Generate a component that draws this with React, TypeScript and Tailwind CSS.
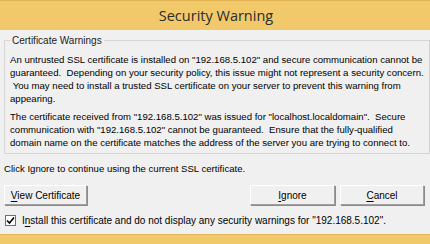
import React from 'react';

const font = { fontFamily: '"Liberation Sans", Arial, sans-serif' };

const Btn: React.FC<{ children: React.ReactNode; className?: string }> = ({ children, className }) => (
  <button
    className={`h-[20px] bg-[#f0f0f0] border border-t-white border-l-white border-r-[#a0a0a0] border-b-[#a0a0a0] shadow-[1px_1px_0_#8a8a8a] text-[10px] text-black ${className ?? ''}`}
  >
    {children}
  </button>
);

export default function App() {
  return (
    <div className="w-[430px] h-[244px] flex flex-col bg-[#f0f0f0] overflow-hidden text-black" style={font}>
      <div className="h-[30px] shrink-0 bg-[#f1c96b] border-t border-[#e0b453] flex items-center justify-center">
        <span className="text-[14.5px] text-[#2b2b2b] pl-[2px]" style={{ fontFamily: '"Open Sans", "Noto Sans", sans-serif' }}>
          Security Warning
        </span>
      </div>

      <div className="flex-1 flex flex-col px-[4px]">
        <fieldset className="mt-[3px] border border-[#d5d5d5] px-[5px] pb-[6px] h-[121px]">
          <legend className="px-[2px] text-[10px] text-[#222]">Certificate Warnings</legend>
          <div className="text-[9.6px] leading-[13px] whitespace-nowrap mt-[5px]">
            <p>
              An untrusted SSL certificate is installed on "192.168.5.102" and secure communication cannot be
              <br />
              guaranteed.&nbsp; Depending on your security policy, this issue might not represent a security concern.
              <br />
              &nbsp;You may need to install a trusted SSL certificate on your server to prevent this warning from
              <br />
              appearing.
            </p>
            <p className="mt-[5px]">
              The certificate received from "192.168.5.102" was issued for "localhost.localdomain".&nbsp; Secure
              <br />
              communication with "192.168.5.102" cannot be guaranteed.&nbsp; Ensure that the fully-qualified
              <br />
              domain name on the certificate matches the address of the server you are trying to connect to.
            </p>
          </div>
        </fieldset>

        <p className="mt-[8px] text-[9.6px] leading-[13px]">Click Ignore to continue using the current SSL certificate.</p>

        <div className="mt-[10px] flex items-center">
          <Btn className="w-[83px]">
            <span className="underline underline-offset-2">V</span>iew Certificate
          </Btn>
          <div className="flex-1" />
          <Btn className="w-[85px] mr-[5px]">
            <span className="underline underline-offset-2">I</span>gnore
          </Btn>
          <Btn className="w-[84px] mr-[2px]">
            <span className="underline underline-offset-2">C</span>ancel
          </Btn>
        </div>

        <label className="mt-[8px] flex items-center gap-[6px] text-[10px] ml-[1px]">
          <span className="w-[11px] h-[11px] border border-[#707070] bg-white flex items-center justify-center">
            <svg width="9" height="9" viewBox="0 0 9 9">
              <path d="M1 4.5 L3.5 7 L8 1.5" stroke="#000" strokeWidth="1.6" fill="none" />
            </svg>
          </span>
          <span>
            I<span className="underline underline-offset-2">n</span>stall this certificate and do not display any security warnings for "192.168.5.102".
          </span>
        </label>
      </div>

      <div className="h-[10px] shrink-0 bg-[#f0c96a] border-t border-[#e3b45a]" />
    </div>
  );
}
